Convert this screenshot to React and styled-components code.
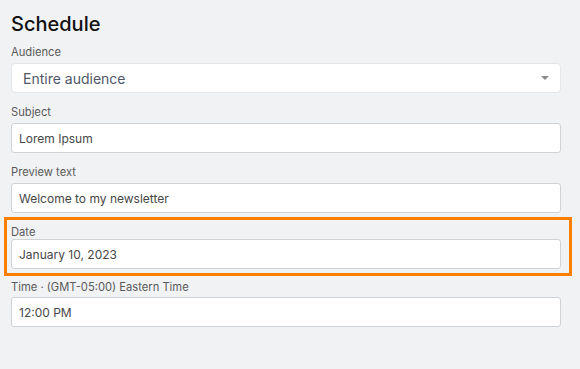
import styled, { createGlobalStyle } from "styled-components";

const GlobalStyle = createGlobalStyle`
  html, body {
    margin: 0;
    padding: 0;
    background: #f1f2f4;
  }
  body {
    font-family: Inter, "Noto Sans", sans-serif;
  }
`;

const Page = styled.div`
  min-height: 369px;
  box-sizing: border-box;
  padding: 12px 19px 0 11px;
  display: flex;
  flex-direction: column;
`;

const Title = styled.h1`
  margin: 0 0 9px;
  font-size: 20px;
  line-height: 24px;
  font-weight: 500;
  color: #111;
`;

const Field = styled.div`
  display: flex;
  flex-direction: column;
  gap: ${(p) => p.$gap ?? 4}px;
  margin-bottom: ${(p) => p.$after ?? 12}px;
`;

const Label = styled.label`
  font-size: 11.2px;
  line-height: 14px;
  color: #5a5a5a;
`;

const Input = styled.div`
  box-sizing: border-box;
  height: 30px;
  display: flex;
  align-items: center;
  padding: 0 7px;
  background: #fff;
  border: 1px solid #cfd3d8;
  border-radius: 3px;
  font-size: 12px;
  color: #474747;
`;

const Select = styled(Input)`
  justify-content: space-between;
  padding: 0 11px;
  border-color: #e4e6e9;
  border-radius: 4px;
  font-size: 14px;
  color: #4f5768;
`;

const Caret = styled.span`
  width: 0;
  height: 0;
  border-left: 4px solid transparent;
  border-right: 4px solid transparent;
  border-top: 4px solid #8a8a8a;
`;

const Highlight = styled.div`
  border: 3px solid #ff8000;
  padding: 5px 8px 4px 4px;
  margin: 0 -11px 4px -7px;
`;

export default function App() {
  return (
    <>
      <GlobalStyle />
      <Page>
        <Title>Schedule</Title>
        <Field>
          <Label>Audience</Label>
          <Select>
            Entire audience
            <Caret />
          </Select>
        </Field>
        <Field>
          <Label>Subject</Label>
          <Input>Lorem Ipsum</Input>
        </Field>
        <Field $after={4}>
          <Label>Preview text</Label>
          <Input>Welcome to my newsletter</Input>
        </Field>
        <Highlight>
          <Field $gap={0} $after={0}>
            <Label>Date</Label>
            <Input>January 10, 2023</Input>
          </Field>
        </Highlight>
        <Field $gap={3}>
          <Label>Time · (GMT-05:00) Eastern Time</Label>
          <Input>12:00 PM</Input>
        </Field>
      </Page>
    </>
  );
}
